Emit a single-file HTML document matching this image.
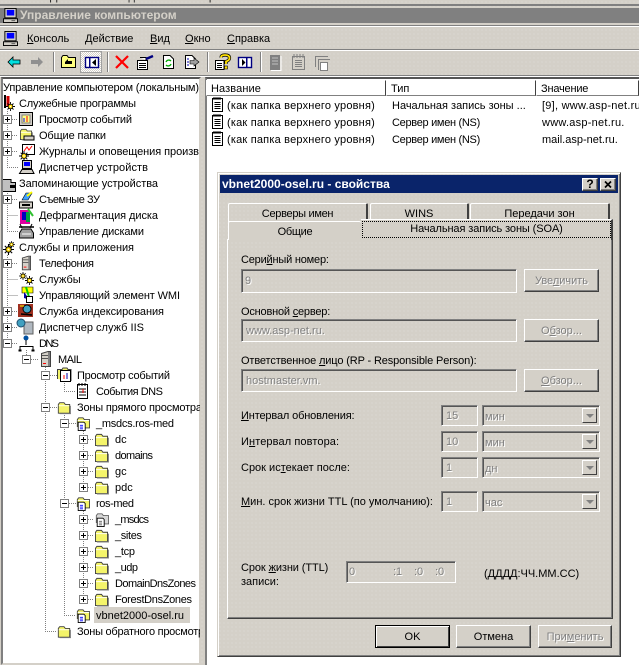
<!DOCTYPE html>
<html><head><meta charset="utf-8">
<style>
html,body{margin:0;padding:0}
body{width:639px;height:665px;position:relative;overflow:hidden;background:#d4d0c8 radial-gradient(circle,#dedbd4 .6px,transparent .8px) 0 0/4px 4px;font-family:"Liberation Sans","Noto Sans CJK JP",sans-serif;font-size:11px;color:#000}
.a{position:absolute;box-sizing:border-box}
.t{position:absolute;white-space:nowrap;line-height:14px}
.d{color:#808080;text-shadow:1px 1px 0 #fff}
.in{position:absolute;box-sizing:border-box;border:1px solid;border-color:#808080 #fff #fff #808080;box-shadow:inset 1px 1px 0 #555;overflow:hidden;line-height:14px}
.btn{position:absolute;box-sizing:border-box;background:#d4d0c8;border:1px solid;border-color:#fff #404040 #404040 #fff;box-shadow:inset -1px -1px 0 #808080;text-align:center;line-height:22px}
.hd{position:absolute;top:80px;height:16px;box-sizing:border-box;border:1px solid;border-color:#fff #404040 #808080 #fff;line-height:16px;padding-left:4px;white-space:nowrap;overflow:hidden}
.tab{position:absolute;box-sizing:border-box;border-top:1px solid #fff;border-left:1px solid #fff;border-right:2px solid #404040;text-align:center;white-space:nowrap;border-radius:2px 2px 0 0}
.arr{position:absolute;box-sizing:border-box;right:2px;top:2px;width:15px;height:15px;background:#d4d0c8;border:1px solid;border-color:#fff #404040 #404040 #fff}
.arr:after{content:"";position:absolute;left:3px;top:5px;border:4px solid transparent;border-top:4px solid #808080;border-bottom:0}
svg{position:absolute;left:0;top:0}
svg text{font-family:"Liberation Sans","Noto Sans CJK JP",sans-serif;font-size:11px;fill:#000}
</style></head>
<body>
<!-- top strip -->
<div class="t" style="left:-10px;top:-10px;color:#222">Консоль</div>
<div class="t" style="left:50px;top:-10px;color:#222">Действие</div>
<div class="t" style="left:115px;top:-10px;color:#222">Вид</div>
<div class="t" style="left:144px;top:-10px;color:#222">Окно</div>
<div class="t" style="left:195px;top:-10px;color:#222">Справка</div>
<div class="a" style="left:0;top:4px;width:639px;height:2px;background:#808080"></div>
<div class="a" style="left:0;top:8px;width:639px;height:15px;background:#808080"></div>
<div class="t" style="left:20px;top:8px;color:#d4d0c8;font-weight:bold;font-size:12px">Управление компьютером</div>
<div class="a" style="left:0;top:25px;width:639px;height:1px;background:#808080"></div>
<div class="a" style="left:0;top:26px;width:639px;height:1px;background:#fff"></div>
<div class="a" style="left:0;top:49px;width:639px;height:1px;background:#808080"></div>
<div class="a" style="left:0;top:50px;width:639px;height:1px;background:#fff"></div>
<div class="a" style="left:0;top:75px;width:639px;height:1px;background:#808080"></div>
<div class="a" style="left:0;top:76px;width:639px;height:1px;background:#fff"></div>
<!-- menu -->
<div class="t" style="left:27px;top:32px"><u>К</u>онсоль</div>
<div class="t" style="left:85px;top:32px"><u>Д</u>ействие</div>
<div class="t" style="left:150px;top:32px"><u>В</u>ид</div>
<div class="t" style="left:185px;top:32px"><u>О</u>кно</div>
<div class="t" style="left:227px;top:32px"><u>С</u>правка</div>
<!-- panes -->
<div class="a" style="left:1px;top:77px;width:200px;height:588px;background:#fff;border:2px solid;border-color:#555 #d4d0c8 #d4d0c8 #808080"></div>
<div class="a" style="left:205px;top:77px;width:434px;height:588px;background:#fff;border-top:2px solid #555;border-left:2px solid #808080"></div>
<div class="hd" style="left:206px;width:180px;letter-spacing:.1px">Название</div>
<div class="hd" style="left:386px;width:150px">Тип</div>
<div class="hd" style="left:536px;width:103px;letter-spacing:-.2px">Значение</div>
<div class="t" style="left:227px;top:99px;letter-spacing:.2px">(как папка верхнего уровня)</div>
<div class="t" style="left:392px;top:99px">Начальная запись зоны ...</div>
<div class="t" style="left:542px;top:99px;letter-spacing:.25px">[9], www.asp-net.ru.</div>
<div class="t" style="left:227px;top:116px;letter-spacing:.2px">(как папка верхнего уровня)</div>
<div class="t" style="left:392px;top:116px;letter-spacing:-.3px">Сервер имен (NS)</div>
<div class="t" style="left:542px;top:116px;letter-spacing:.25px">www.asp-net.ru.</div>
<div class="t" style="left:227px;top:133px;letter-spacing:.2px">(как папка верхнего уровня)</div>
<div class="t" style="left:392px;top:133px;letter-spacing:-.3px">Сервер имен (NS)</div>
<div class="t" style="left:542px;top:133px">mail.asp-net.ru.</div>

<svg width="639" height="665" viewBox="0 0 639 665">
<defs>
<symbol id="pc" viewBox="0 0 16 16" overflow="visible"><rect x="2" y="0.5" width="12" height="10" fill="#d4d0c8" stroke="#000"/><rect x="4" y="2" width="8" height="6" fill="#00f"/><rect x="0.5" y="11.5" width="15" height="4" fill="#d4d0c8" stroke="#000"/><rect x="9" y="13" width="4" height="1" fill="#555"/></symbol>
<symbol id="fo" viewBox="0 0 16 14" overflow="visible"><path d="M1.5 13.5V3.5L3 1.5H8L9.5 3.5H14.5V13.5Z" fill="#f4f46a" stroke="#404040"/><path d="M2 5H14" stroke="#fff"/><path d="M15.5 5V14H3" stroke="#808080" fill="none"/></symbol>
<symbol id="zo" viewBox="0 0 16 16" overflow="visible"><path d="M1.5 12V3.5L3 1.5H8L9.5 3.5H15.5V13H10" fill="#f4f46a" stroke="#404040"/><path d="M2 4.5H15" stroke="#fff"/><path d="M2.500 6.500H9L10.500 8V16H2.500Z" fill="#fff" stroke="#000"/><path d="M4.500 10H8M4.500 12H8M4.500 14H8" stroke="#00f"/></symbol>
<symbol id="zg" viewBox="0 0 16 16" overflow="visible"><path d="M1.5 12V3.500L3 1.500H8L9.500 3.500H15.500V13H10" fill="#d8d8d8" stroke="#606060"/><path d="M2.500 6.500H9L10.500 8V16H2.500Z" fill="#fff" stroke="#000"/><path d="M4.500 10H8M4.500 12H8M4.500 14H8" stroke="#606060"/></symbol>
<symbol id="nt" viewBox="0 0 11 15" overflow="visible"><rect x="0.500" y="1.500" width="10" height="13" fill="#fff" stroke="#000"/><path d="M2 0V3M4 0V3M6 0V3M8 0V3" stroke="#000"/><path d="M2.500 5.500H8.500M2.500 7.500H8.500M2.500 9.500H8.500M2.500 11.500H8.500" stroke="#000"/></symbol>
<symbol id="srv" viewBox="0 0 11 16" overflow="visible"><path d="M1.500 2.500L8 .5H10.500V15.500H1.500Z" fill="#d4d0c8" stroke="#404040"/><path d="M2 4.500H10M2 7.500H10" stroke="#555"/><rect x="3" y="12" width="3" height="1" fill="#f00"/><rect x="8" y="1" width="2" height="14" fill="#808080"/></symbol>
<symbol id="gear" viewBox="0 0 12 12" overflow="visible"><path d="M6 0V12M0 6H12M2 2L10 10M2 10L10 2" stroke="#000" stroke-width="1.200"/><circle cx="6" cy="6" r="3" fill="#ffd800" stroke="#000"/><circle cx="6" cy="6" r="1" fill="#fff"/></symbol>
<symbol id="p" viewBox="0 0 9 9"><rect x=".5" y=".5" width="8" height="8" fill="#fff" stroke="#808080"/><path d="M2 4.500H7M4.500 2V7" stroke="#000"/></symbol>
<symbol id="m" viewBox="0 0 9 9"><rect x=".5" y=".5" width="8" height="8" fill="#fff" stroke="#808080"/><path d="M2 4.500H7" stroke="#000"/></symbol>
<pattern id="dh" width="2" height="2" patternUnits="userSpaceOnUse"><rect width="2" height="2" fill="#fff"/><rect width="1" height="1" fill="#d4d0c8"/><rect x="1" y="1" width="1" height="1" fill="#d4d0c8"/></pattern>
</defs>

<!-- title and menu icons -->
<use href="#pc" x="3" y="8" width="15" height="15"/>
<use href="#pc" x="3" y="31" width="15" height="15"/>

<!-- toolbar -->
<path d="M8 62L13 57V60H20V64H13V67Z" fill="#00e0e0" stroke="#000" stroke-width=".8"/>
<path d="M43 62L38 57V60H31V64H38V67Z" fill="#909090"/>
<path d="M53.500 52V72M107.500 52V72M207.500 52V72M260.500 52V72" stroke="#808080"/>
<path d="M54.500 52V72M108.500 52V72M208.500 52V72M261.500 52V72" stroke="#fff"/>
<path d="M61.500 67.500V57.500L63 55.500H67L68.500 57.500H75.500V67.500Z" fill="#ffff80" stroke="#000"/>
<path d="M65 62L68 59V61H72V64H65Z" fill="#000"/>
<rect x="80.500" y="51.500" width="21" height="21" fill="url(#dh)" stroke="#a0a0a0"/>
<rect x="85.500" y="57.500" width="13" height="10" fill="#fff" stroke="#000080" stroke-width="1.400"/>
<rect x="89" y="58" width="1.500" height="9" fill="#000080"/>
<path d="M96 59V66L92 62.500Z" fill="#000"/>
<path d="M116 56L128 68M128 56L116 68" stroke="#f00" stroke-width="2.200"/>
<path d="M137.500 60.500H147.500V69.500H137.500ZM140 57.500H146V60" fill="#fff" stroke="#000"/><path d="M139 63.500H146M139 65.500H146M139 67.500H146" stroke="#000"/><path d="M146 59L153 56" stroke="#000080" stroke-width="2.500"/>
<path d="M163.500 55.500H170L173.500 59V68.500H163.500Z" fill="#fff" stroke="#000"/><path d="M166 62a3 3 0 0 1 5-1M171 64a3 3 0 0 1-5 1" stroke="#0a0" stroke-width="1.300" fill="none"/>
<path d="M185.500 55.500H192L195.500 59V68.500H185.500Z" fill="#fff" stroke="#000"/><path d="M187 59H189M187 62H189M187 65H189" stroke="#00a"/><path d="M190 60.500H194V58L199 62L194 66V64H190Z" fill="#a0a0a0" stroke="#000" stroke-width=".6"/>
<path d="M215.500 60.500H224V69.500H215.500Z" fill="#fff" stroke="#000"/><path d="M217 63.500H222M217 65.500H222M217 67.500H222" stroke="#000"/>
<path d="M221 57.500Q221 55 225 55Q229.500 55 229.500 58Q229.500 60.500 226 61.500V64" fill="none" stroke="#000" stroke-width="3.200"/><path d="M221 57.500Q221 55 225 55Q229.500 55 229.500 58Q229.500 60.500 226 61.500V64" fill="none" stroke="#ffe000" stroke-width="1.800"/><rect x="224.500" y="66" width="3" height="3" fill="#ffe000" stroke="#000" stroke-width=".6"/>
<rect x="238.500" y="57.500" width="13" height="10" fill="#fff" stroke="#000080" stroke-width="1.400"/><rect x="246" y="58" width="1.500" height="9" fill="#000080"/><path d="M242 59V66L245.500 62.500Z" fill="#000"/>
<rect x="270" y="55" width="10" height="15" fill="#808080"/><path d="M272 58H278M272 61H278M272 64H278" stroke="#c0c0c0"/><path d="M281 56V70.500H271" stroke="#fff" fill="none"/>
<rect x="292.500" y="56.500" width="12" height="13" fill="#d4d0c8" stroke="#808080"/><path d="M294 54V58M297 54V58M300 54V58M303 54V58M295 60.500H302M295 62.500H302M295 64.500H302M295 66.500H302" stroke="#808080"/>
<path d="M315.500 67V56.500H328M318.500 70V59.500H330" stroke="#808080" fill="#d4d0c8"/><rect x="320.500" y="62.500" width="7" height="8" fill="#fff" stroke="#808080"/>

<!-- list icons -->
<use href="#nt" x="212" y="97" width="11" height="15"/>
<use href="#nt" x="212" y="114" width="11" height="15"/>
<use href="#nt" x="212" y="131" width="11" height="15"/>

<!-- tree -->
<svg x="3" y="79" width="197" height="586" viewBox="3 79 197 586">
<rect x="94" y="607" width="96" height="16" fill="#d4d0c8"/>
<g stroke="#808080" stroke-dasharray="1 1" fill="none">
<path d="M7.500 111V167.500H18M12 119.500H18M12 135.500H18M12 151.500H18"/>
<path d="M7.500 191V231.500H18M12 199.500H18M7.500 215.500H18"/>
<path d="M7.500 255V343M12 263.500H18M7.500 279.500H18M7.500 295.500H18M12 311.500H18M12 327.500H18M12 343.500H18"/>
<path d="M26.500 350V355M31 359.500H39"/>
<path d="M45.500 367V631.500H57M50 375.500H57M50 407.500H57"/>
<path d="M64.500 383V391.500H76"/>
<path d="M64.500 415V615.500H76M69 423.500H76M69 503.500H76"/>
<path d="M83.500 431V487M88 439.500H94M88 455.500H94M88 471.500H94M88 487.500H94"/>
<path d="M83.500 511V599M88 519.500H94M88 535.500H94M88 551.500H94M88 567.500H94M88 583.500H94M88 599.500H94"/>
</g>
<g>
<use href="#p" x="3" y="115" width="9" height="9"/><use href="#p" x="3" y="131" width="9" height="9"/><use href="#p" x="3" y="147" width="9" height="9"/>
<use href="#p" x="3" y="195" width="9" height="9"/>
<use href="#p" x="3" y="259" width="9" height="9"/><use href="#p" x="3" y="307" width="9" height="9"/><use href="#p" x="3" y="323" width="9" height="9"/>
<use href="#m" x="3" y="339" width="9" height="9"/><use href="#m" x="22" y="355" width="9" height="9"/>
<use href="#m" x="41" y="371" width="9" height="9"/><use href="#m" x="41" y="403" width="9" height="9"/>
<use href="#m" x="60" y="419" width="9" height="9"/><use href="#m" x="60" y="499" width="9" height="9"/>
<use href="#p" x="79" y="435" width="9" height="9"/><use href="#p" x="79" y="451" width="9" height="9"/><use href="#p" x="79" y="467" width="9" height="9"/><use href="#p" x="79" y="483" width="9" height="9"/>
<use href="#p" x="79" y="515" width="9" height="9"/><use href="#p" x="79" y="531" width="9" height="9"/><use href="#p" x="79" y="547" width="9" height="9"/><use href="#p" x="79" y="563" width="9" height="9"/><use href="#p" x="79" y="579" width="9" height="9"/><use href="#p" x="79" y="595" width="9" height="9"/>
</g>
<!-- tree icons -->
<path d="M5 95V108" stroke="#000" stroke-width="2"/><path d="M8 96V106" stroke="#c00" stroke-width="3"/><use href="#gear" x="6" y="102" width="9" height="9"/>
<rect x="19.500" y="112.500" width="13" height="13" fill="#d4d0c8" stroke="#000"/><rect x="22" y="115" width="8" height="8" fill="#ffff80" stroke="#808080"/><path d="M27 116V122" stroke="#f00"/><path d="M24 118V122" stroke="#00f"/>
<use href="#fo" x="19" y="128" width="14" height="12"/><rect x="24" y="136" width="10" height="4" fill="#d4d0c8" stroke="#000"/>
<rect x="22.500" y="144.500" width="12" height="10" fill="#fff" stroke="#000"/><path d="M24 151L27 147L29 150L32 146" stroke="#f00" fill="none"/><use href="#gear" x="19" y="151" width="10" height="10"/>
<rect x="22.500" y="160.500" width="9" height="8" fill="#d4d0c8" stroke="#000"/><rect x="24" y="162" width="6" height="4" fill="#00f"/><path d="M19.500 173.500L22 169.500H32L34 173.500Z" fill="#d4d0c8" stroke="#000"/>
<path d="M2.500 179.500H11V182.500H15.500V191.500H2.500Z" fill="#c0c0c0" stroke="#000"/><rect x="10" y="185" width="5" height="3" fill="#000"/>
<path d="M19.500 202H32.500V208H19.500Z" fill="#d4d0c8" stroke="#000"/><path d="M22 200L26 193H32L28 200Z" fill="#40a0ff" stroke="#000" stroke-width=".6"/><path d="M27 196L32 192" stroke="#ff0" stroke-width="2"/><rect x="22" y="204" width="8" height="2" fill="#000"/>
<rect x="20" y="210" width="10" height="14" fill="#e000a0"/><rect x="22" y="212" width="4" height="8" fill="#0000c0"/><rect x="26" y="212" width="4" height="10" fill="#00a040"/><path d="M28 209L33 216" stroke="#30c030" stroke-width="2"/>
<path d="M19 227H34" stroke="#000" stroke-width="1.500"/><path d="M20 224L22 228M32 224L30 228" stroke="#000"/><path d="M19.500 233L22 229H31L33.500 233V238H19.500Z" fill="#a0a0a0" stroke="#000"/><path d="M22 234H31" stroke="#fff"/>
<use href="#gear" x="3" y="244" width="11" height="11"/><use href="#gear" x="8" y="241" width="7" height="7"/>
<use href="#srv" x="21" y="255" width="10" height="16"/>
<use href="#gear" x="19" y="272" width="8" height="8"/><use href="#gear" x="25" y="276" width="9" height="9"/>
<path d="M22 287H33V293H22Z" fill="#ff0" stroke="#000" stroke-width=".6"/><path d="M24 292L30 300L24 298Z" fill="#00a" /><path d="M26 287L29 297" stroke="#0c0" stroke-width="2"/><rect x="26.500" y="296.500" width="6" height="6" fill="#fff" stroke="#000"/>
<rect x="18" y="304" width="15" height="13" fill="#a03020"/><circle cx="27" cy="309" r="4" fill="#40a0c0" stroke="#000"/><path d="M21 314L32 315" stroke="#000" stroke-width="1.500"/><path d="M20 306H24" stroke="#ff0"/>
<rect x="24" y="322" width="9" height="12" fill="#b0b8c0" stroke="#606060"/><circle cx="21" cy="323" r="4" fill="#40a0c0" stroke="#205070"/>
<circle cx="26" cy="338" r="2.500" fill="#0050a0"/><path d="M26 340V345M20 350V346.500H33V350" stroke="#000" fill="none"/><rect x="18.500" y="349.500" width="3" height="2" fill="#000"/><rect x="31.500" y="349.500" width="3" height="2" fill="#000"/>
<use href="#srv" x="40" y="351" width="11" height="16"/>
<path d="M57.500 379V369.500H62L63 368H67L68 369.500H71V381" fill="#f4f46a" stroke="#404040"/><rect x="60.500" y="370.500" width="10" height="11" fill="#fff" stroke="#000"/><path d="M64 375V379" stroke="#f00"/><path d="M67 373V379" stroke="#00a"/>
<rect x="77.500" y="384.500" width="10" height="14" fill="#fff" stroke="#000"/><path d="M79 383V386M82 383V386M85 383V386M79 389H86M79 392H86M79 395H86" stroke="#000"/><path d="M83 389V393" stroke="#f00"/>
<use href="#fo" x="57" y="401" width="14" height="13"/>
<use href="#zo" x="76" y="416" width="14" height="15"/>
<use href="#fo" x="94" y="433" width="15" height="13"/><use href="#fo" x="94" y="449" width="15" height="13"/><use href="#fo" x="94" y="465" width="15" height="13"/><use href="#fo" x="94" y="481" width="15" height="13"/>
<use href="#zo" x="76" y="496" width="14" height="15"/>
<use href="#zg" x="95" y="512" width="14" height="15"/>
<use href="#fo" x="94" y="529" width="15" height="13"/><use href="#fo" x="94" y="545" width="15" height="13"/><use href="#fo" x="94" y="561" width="15" height="13"/><use href="#fo" x="94" y="577" width="15" height="13"/><use href="#fo" x="94" y="593" width="15" height="13"/>
<use href="#zo" x="76" y="608" width="14" height="15"/>
<use href="#fo" x="57" y="625" width="14" height="13"/>
<!-- tree text -->
<text x="3" y="91" textLength="196">Управление компьютером (локальным)</text>
<text x="19" y="107" textLength="117">Служебные программы</text>
<text x="39" y="123" textLength="93">Просмотр событий</text>
<text x="39" y="139" textLength="67">Общие папки</text>
<text x="39" y="155" textLength="160">Журналы и оповещения произв</text>
<text x="39" y="171" textLength="109">Диспетчер устройств</text>
<text x="19" y="187" textLength="139">Запоминающие устройства</text>
<text x="39" y="203" textLength="61">Съемные ЗУ</text>
<text x="39" y="219" textLength="119">Дефрагментация диска</text>
<text x="39" y="235" textLength="105">Управление дисками</text>
<text x="19" y="251" textLength="115">Службы и приложения</text>
<text x="39" y="267" textLength="55">Телефония</text>
<text x="39" y="283">Службы</text>
<text x="39" y="299" textLength="141">Управляющий элемент WMI</text>
<text x="39" y="315" textLength="125">Служба индексирования</text>
<text x="39" y="331" textLength="105">Диспетчер служб IIS</text>
<text x="39" y="347" textLength="20">DNS</text>
<text x="58" y="363" textLength="24">MAIL</text>
<text x="77" y="379" textLength="93">Просмотр событий</text>
<text x="96" y="395" textLength="67">События DNS</text>
<text x="77" y="411" textLength="125">Зоны прямого просмотра</text>
<text x="96" y="427" textLength="78">_msdcs.ros-med</text>
<text x="115" y="443">dc</text>
<text x="115" y="459" textLength="38">domains</text>
<text x="115" y="475">gc</text>
<text x="115" y="491">pdc</text>
<text x="96" y="507" textLength="38">ros-med</text>
<text x="115" y="523" textLength="34">_msdcs</text>
<text x="115" y="539" textLength="27">_sites</text>
<text x="115" y="555" textLength="20">_tcp</text>
<text x="115" y="571" textLength="23">_udp</text>
<text x="115" y="587" textLength="81">DomainDnsZones</text>
<text x="115" y="603" textLength="77">ForestDnsZones</text>
<text x="96" y="619" textLength="88">vbnet2000-osel.ru</text>
<text x="77" y="635" textLength="133">Зоны обратного просмотра</text>
</svg>
</svg>

<!-- dialog -->
<div class="a" style="left:217px;top:172px;width:404px;height:485px;background:#d4d0c8 radial-gradient(circle,#dedbd4 .6px,transparent .8px) 0 0/4px 4px;border:1px solid;border-color:#d4d0c8 #404040 #404040 #d4d0c8;box-shadow:inset 1px 1px 0 #fff,inset -1px -1px 0 #808080"></div>
<div class="a" style="left:220px;top:175px;width:398px;height:18px;background:#0a246a"></div>
<div class="t" style="left:222px;top:177px;color:#fff;font-weight:bold;font-size:12px">vbnet2000-osel.ru - свойства</div>
<div class="btn" style="left:582px;top:178px;width:16px;height:13px;font-weight:bold;line-height:11px;font-size:12px">?</div>
<div class="btn" style="left:600px;top:178px;width:16px;height:13px"><svg width="14" height="11"><path d="M4 2.500L10 8.500M10 2.500L4 8.500" stroke="#000" stroke-width="1.700"/></svg></div>

<div class="tab" style="left:228px;top:203px;width:140px;height:19px;line-height:20px;letter-spacing:-.3px">Серверы имен</div>
<div class="tab" style="left:370px;top:203px;width:99px;height:19px;line-height:20px">WINS</div>
<div class="tab" style="left:470px;top:203px;width:140px;height:19px;line-height:20px">Передачи зон</div>

<div class="a" style="left:227px;top:239px;width:386px;height:380px;border:1px solid;border-color:#fff #404040 #404040 #fff;box-shadow:inset -1px -1px 0 #808080"></div>
<div class="tab" style="left:228px;top:221px;width:133px;height:19px;line-height:20px;border-right:0;background:#d4d0c8;letter-spacing:-.3px">Общие</div>
<div class="a" style="left:361px;top:219px;width:252px;height:21px;background:#d4d0c8;border-top:1px solid #fff;border-right:2px solid #404040"></div>
<div class="a" style="left:362px;top:221px;width:249px;height:17px;border:1px dotted #000;text-align:center;line-height:15px;letter-spacing:-.1px">Начальная запись зоны (SOA)</div>

<div class="t" style="left:241px;top:253px;letter-spacing:-.2px">Сери<u>й</u>ный номер:</div>
<div class="in d" style="left:241px;top:269px;width:276px;height:24px;padding:4px 3px">9</div>
<div class="btn d" style="left:524px;top:269px;width:75px;height:23px">Уве<u>л</u>ичить</div>

<div class="t" style="left:241px;top:305px;letter-spacing:-.2px">Основной <u>с</u>ервер:</div>
<div class="in d" style="left:241px;top:319px;width:276px;height:23px;padding:4px 4px">www.asp-net.ru.</div>
<div class="btn d" style="left:524px;top:319px;width:75px;height:23px">О<u>б</u>зор...</div>

<div class="t" style="left:241px;top:354px;letter-spacing:-.13px">Ответственное <u>л</u>ицо (RP - Responsible Person):</div>
<div class="in d" style="left:241px;top:369px;width:276px;height:23px;padding:4px 4px">hostmaster.vm.</div>
<div class="btn d" style="left:524px;top:369px;width:75px;height:23px"><u>О</u>бзор...</div>

<div class="t" style="left:241px;top:409px;letter-spacing:-.15px"><u>И</u>нтервал обновления:</div>
<div class="in d" style="left:441px;top:405px;width:37px;height:21px;padding:3px 4px">15</div>
<div class="in d" style="left:482px;top:405px;width:118px;height:21px;padding:4px 2px">мин<span class="arr"></span></div>

<div class="t" style="left:241px;top:435px;letter-spacing:.1px">И<u>н</u>тервал повтора:</div>
<div class="in d" style="left:441px;top:431px;width:37px;height:21px;padding:3px 4px">10</div>
<div class="in d" style="left:482px;top:431px;width:118px;height:21px;padding:4px 2px">мин<span class="arr"></span></div>

<div class="t" style="left:241px;top:461px">Срок ис<u>т</u>екает после:</div>
<div class="in d" style="left:441px;top:457px;width:37px;height:21px;padding:3px 4px">1</div>
<div class="in d" style="left:482px;top:457px;width:118px;height:21px;padding:4px 2px">дн<span class="arr"></span></div>

<div class="t" style="left:241px;top:495px"><u>М</u>ин. срок жизни TTL (по умолчанию):</div>
<div class="in d" style="left:441px;top:491px;width:37px;height:21px;padding:3px 4px">1</div>
<div class="in d" style="left:482px;top:491px;width:118px;height:21px;padding:4px 2px">час<span class="arr"></span></div>

<div class="t" style="left:241px;top:561px;letter-spacing:-.1px">Срок <u>ж</u>изни (TTL)</div>
<div class="t" style="left:241px;top:575px">записи:</div>
<div class="in" style="left:346px;top:561px;width:110px;height:22px"></div>
<div class="t d" style="left:349px;top:565px">0</div>
<div class="t d" style="left:393px;top:565px">:1</div>
<div class="t d" style="left:414px;top:565px">:0</div>
<div class="t d" style="left:435px;top:565px">:0</div>
<div class="t" style="left:484px;top:567px">(ДДДД:ЧЧ.ММ.СС)</div>

<div class="btn" style="left:375px;top:625px;width:75px;height:23px;border:1px solid #000;box-shadow:inset 1px 1px 0 #fff,inset -1px -1px 0 #404040">OK</div>
<div class="btn" style="left:456px;top:625px;width:75px;height:23px">Отмена</div>
<div class="btn d" style="left:538px;top:625px;width:74px;height:23px">При<u>м</u>енить</div>
</body></html>
